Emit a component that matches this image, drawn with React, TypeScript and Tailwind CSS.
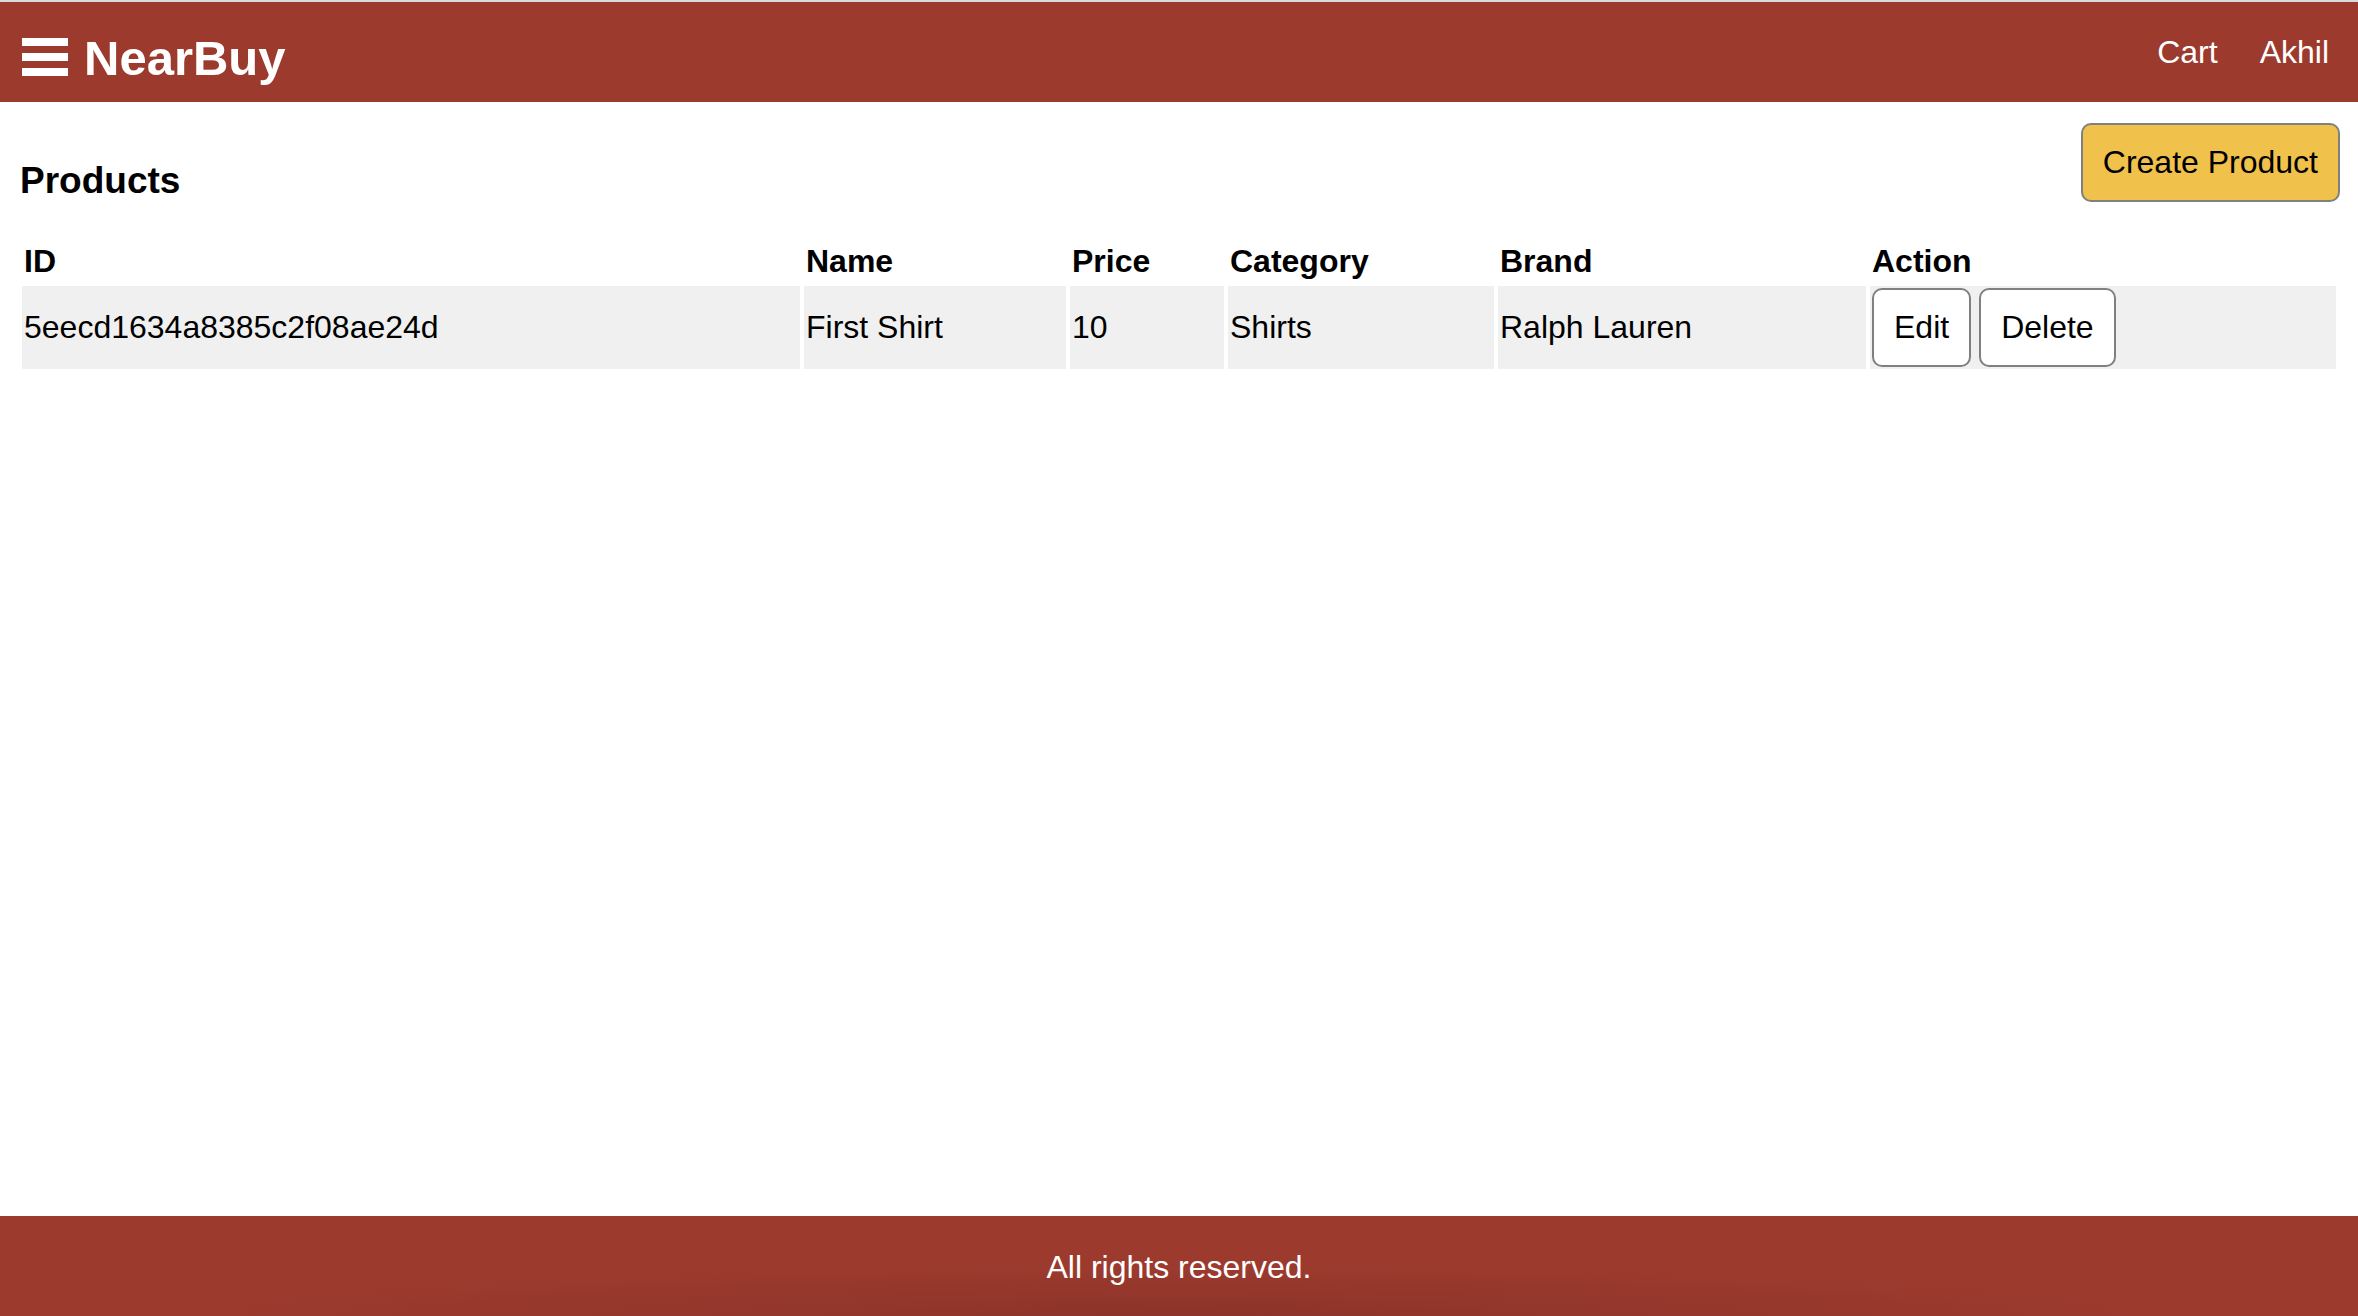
const PRODUCTS = [
  {
    _id: "5eecd1634a8385c2f08ae24d",
    name: "First Shirt",
    price: 10,
    category: "Shirts",
    brand: "Ralph Lauren",
  },
];

export default function App() {
  return (
    <div className="flex min-h-screen flex-col bg-white font-['Liberation_Sans',Arial,sans-serif] text-black">
      {/* top edge of the window */}
      <div className="h-[2px] bg-[#dadada]" />

      <header className="flex h-[100px] items-center justify-between bg-[#9c3a2e] pl-[22px] pr-[29px] text-white">
        <div className="mt-[12px] flex items-center gap-[16px]">
          <button type="button" className="mb-[3px] flex w-[46px] flex-col gap-[7px]">
            <span className="block h-2 w-full bg-white" />
            <span className="block h-2 w-full bg-white" />
            <span className="block h-2 w-full bg-white" />
          </button>
          <a href="#" className="text-[49px] leading-[56px] font-bold">
            NearBuy
          </a>
        </div>
        <nav className="flex items-center gap-[42px] text-[32px] leading-[37px]">
          <a href="#">Cart</a>
          <a href="#">Akhil</a>
        </nav>
      </header>

      <main className="flex-1 px-[18px] pt-[21px]">
        <div className="flex items-end justify-between">
          <h2 className="pl-[2px] text-[37px] leading-[42px] font-bold">Products</h2>
          <button
            type="button"
            className="h-[79px] rounded-[10px] border-2 border-[#808080] bg-[#f0c14b] px-[20px] text-[32px] leading-[37px]"
          >
            Create Product
          </button>
        </div>

        <table className="mt-[35px] w-full table-fixed border-separate border-spacing-1 text-[32px] leading-[37px]">
          <colgroup>
            <col className="w-[778px]" />
            <col className="w-[262px]" />
            <col className="w-[154px]" />
            <col className="w-[266px]" />
            <col className="w-[368px]" />
            <col />
          </colgroup>
          <thead>
            <tr>
              <th className="p-[2px] text-left font-bold">ID</th>
              <th className="p-[2px] text-left font-bold">Name</th>
              <th className="p-[2px] text-left font-bold">Price</th>
              <th className="p-[2px] text-left font-bold">Category</th>
              <th className="p-[2px] text-left font-bold">Brand</th>
              <th className="p-[2px] text-left font-bold">Action</th>
            </tr>
          </thead>
          <tbody>
            {PRODUCTS.map((product) => (
              <tr key={product._id}>
                <td className="bg-[#f0f0f0] p-[2px]">{product._id}</td>
                <td className="bg-[#f0f0f0] p-[2px]">{product.name}</td>
                <td className="bg-[#f0f0f0] p-[2px]">{product.price}</td>
                <td className="bg-[#f0f0f0] p-[2px]">{product.category}</td>
                <td className="bg-[#f0f0f0] p-[2px]">{product.brand}</td>
                <td className="bg-[#f0f0f0] p-[2px]">
                  <div className="flex gap-2">
                    <button
                      type="button"
                      className="h-[79px] rounded-[10px] border-2 border-[#808080] bg-white px-[20px]"
                    >
                      Edit
                    </button>
                    <button
                      type="button"
                      className="h-[79px] rounded-[10px] border-2 border-[#808080] bg-white px-[20px]"
                    >
                      Delete
                    </button>
                  </div>
                </td>
              </tr>
            ))}
          </tbody>
        </table>
      </main>

      <footer className="flex h-[100px] items-center justify-center bg-[#9c3a2e] bg-[radial-gradient(ellipse_1000px_50px_at_50%_100%,#8d3329,transparent)] pt-[2px] text-[32px] leading-[37px] text-white">
        All rights reserved.
      </footer>
    </div>
  );
}
